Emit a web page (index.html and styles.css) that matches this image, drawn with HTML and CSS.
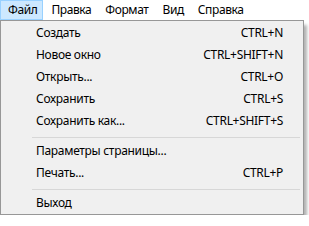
FILE: index.html
```html
<!DOCTYPE html>
<html lang="ru">
<head>
    <meta charset="UTF-8">
    <title>Блокнот — меню Файл</title>
    <link rel="stylesheet" href="styles.css">
</head>
<body>
    <div class="menubar">
        <div class="menubar-item active">Файл</div>
        <div class="menubar-item">Правка</div>
        <div class="menubar-item">Формат</div>
        <div class="menubar-item">Вид</div>
        <div class="menubar-item">Справка</div>
    </div>

    <div class="dropdown">
        <div class="menu-item"><span>Создать</span><span class="shortcut">CTRL+N</span></div>
        <div class="menu-item"><span>Новое окно</span><span class="shortcut">CTRL+SHIFT+N</span></div>
        <div class="menu-item"><span>Открыть...</span><span class="shortcut">CTRL+O</span></div>
        <div class="menu-item"><span>Сохранить</span><span class="shortcut">CTRL+S</span></div>
        <div class="menu-item"><span>Сохранить как...</span><span class="shortcut">CTRL+SHIFT+S</span></div>
        <div class="separator"></div>
        <div class="menu-item"><span>Параметры страницы...</span></div>
        <div class="menu-item"><span>Печать...</span><span class="shortcut">CTRL+P</span></div>
        <div class="separator"></div>
        <div class="menu-item"><span>Выход</span></div>
    </div>
</body>
</html>
```

FILE: styles.css
```css
:root {
    --menu-bg: #f0f0f0;
    --menu-border: #979797;
    --separator-color: #d7d7d7;
    --hover-bg: #cce8ff;
    --hover-border: #99d1ff;
    --text-color: #000;
}

body {
    margin: 0;
    padding: 0;
    background: #fff;
    font-family: 'Noto Sans', 'Liberation Sans', sans-serif;
    font-size: 12px;
    letter-spacing: -0.3px;
    color: var(--text-color);
}

.menubar {
    display: flex;
    height: 20px;
    background: #fff;
}

.menubar-item {
    height: 18px;
    line-height: 18px;
    padding: 0 5px 0 7px;
    border: 1px solid transparent;
    letter-spacing: -0.4px;
}

.menubar-item.active {
    background: var(--hover-bg);
    border-color: var(--hover-border);
}

.dropdown {
    width: 302px;
    padding: 1px 0 0;
    background: var(--menu-bg);
    border: 1px solid var(--menu-border);
    box-shadow: 4px 4px 3px -1px rgba(0, 0, 0, 0.3);
}

.menu-item {
    display: flex;
    justify-content: space-between;
    height: 22px;
    line-height: 22px;
    padding: 0 20px 0 35px;
    white-space: nowrap;
}

.separator {
    height: 1px;
    margin: 5px 3px 2px 31px;
    background: var(--separator-color);
}
```
